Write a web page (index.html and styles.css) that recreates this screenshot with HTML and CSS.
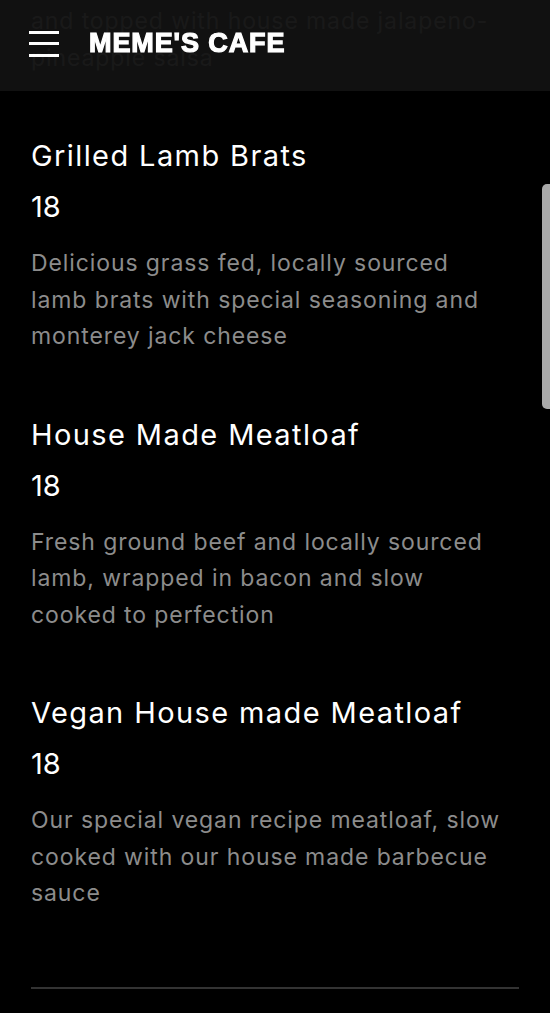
FILE: index.html
```html
<!DOCTYPE html>
<html lang="en">
<head>
    <meta charset="UTF-8">
    <meta name="viewport" content="width=device-width, initial-scale=1.0">
    <title>Meme's Cafe - Menu</title>
    <link rel="stylesheet" href="styles.css">
</head>
<body>
    <header class="top-bar">
        <button class="menu-toggle" aria-label="Menu">
            <span></span>
            <span></span>
            <span></span>
        </button>
        <div class="brand">MEME'S CAFE</div>
    </header>

    <main class="menu">
        <p class="item-desc item-desc-tail">and topped with house made jalapeno-pineapple salsa</p>

        <section class="item">
            <h2 class="item-name">Grilled Lamb Brats</h2>
            <div class="item-price">18</div>
            <p class="item-desc">Delicious grass fed, locally sourced lamb brats with special seasoning and monterey jack cheese</p>
        </section>

        <section class="item">
            <h2 class="item-name">House Made Meatloaf</h2>
            <div class="item-price">18</div>
            <p class="item-desc">Fresh ground beef and locally sourced lamb, wrapped in bacon and slow cooked to perfection</p>
        </section>

        <section class="item">
            <h2 class="item-name">Vegan House made Meatloaf</h2>
            <div class="item-price">18</div>
            <p class="item-desc">Our special vegan recipe meatloaf, slow cooked with our house made barbecue sauce</p>
        </section>

        <hr class="divider">
    </main>

    <div class="scroll-thumb"></div>
</body>
</html>
```

FILE: styles.css
```css
* {
    margin: 0;
    padding: 0;
    box-sizing: border-box;
}

body {
    background: #000;
    color: #fff;
    font-family: Inter, 'Open Sans', Arial, sans-serif;
    overflow: hidden;
    min-height: 100vh;
}

.top-bar {
    position: fixed;
    top: 0;
    left: 0;
    right: 0;
    height: 91px;
    display: flex;
    align-items: center;
    gap: 30px;
    padding: 0 29px 4px;
    background: rgba(18, 18, 18, 0.94);
    z-index: 2;
}

.menu-toggle {
    width: 30px;
    height: 26px;
    display: flex;
    flex-direction: column;
    justify-content: space-between;
    background: none;
    border: none;
}

.menu-toggle span {
    display: block;
    height: 3px;
    background: #fff;
}

.brand {
    font-family: 'Liberation Sans', Arial, sans-serif;
    font-weight: 700;
    font-size: 27px;
    letter-spacing: 0.9px;
    -webkit-text-stroke: 1.2px #fff;
    color: #fff;
}

.menu {
    padding: 3px 31px 0 31px;
}

.item {
    padding-top: 60px;
}

.item-name {
    font-weight: 400;
    font-size: 29px;
    line-height: 40px;
    letter-spacing: 1.4px;
}

.item-price {
    font-size: 29px;
    line-height: 40px;
    margin-top: 11px;
}

.item-desc {
    max-width: 472px;
    margin-top: 18px;
    font-size: 23px;
    line-height: 36.5px;
    color: #8c8c8c;
    letter-spacing: 0.9px;
}

.item-desc-tail {
    margin-top: 0;
}

.divider {
    margin-top: 75px;
    border: none;
    height: 2px;
    background: #333;
}

.scroll-thumb {
    position: fixed;
    right: 0;
    top: 184px;
    width: 8px;
    height: 225px;
    background: #a9a9a9;
    border-radius: 5px 0 0 5px;
}
```
